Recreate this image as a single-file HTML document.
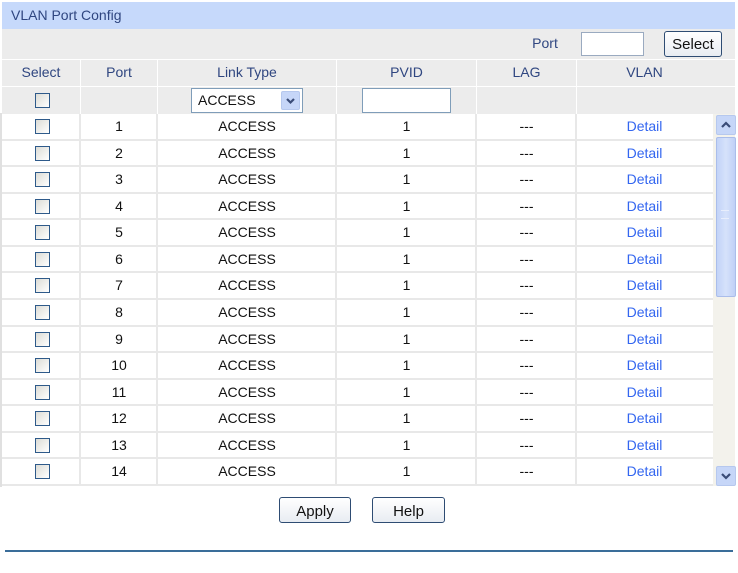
<!DOCTYPE html>
<html><head><style>
body{margin:0;width:738px;height:573px;background:#fff;font-family:"Liberation Sans",Arial,sans-serif;font-size:14px;position:relative;overflow:hidden}
.a{position:absolute}
.hdr{left:2px;top:2px;width:733px;height:27px;background:#c6d9fb;color:#2f4680;font-size:14px;line-height:27px;text-indent:9px}
.gray{left:2px;top:29px;width:733px;height:85px;background:#ececec}
.th{color:#2f4680;text-align:center;line-height:26px}
.cb{width:13px;height:13px;border:1px solid #2e5a8a;background:linear-gradient(135deg,#dcdcd6,#fff)}
.vl{background:#e8e8e8;width:2px}
.row{left:2px;width:711px;height:26.57px;background:#fff;box-shadow:inset 0 -2px 0 #e8e8e8}
.row div{position:absolute;top:0;line-height:25px;text-align:center;color:#111}
.btn{border:1px solid #2e4c73;border-radius:3px;background:linear-gradient(#fff,#e8ecf2);text-align:center;line-height:24px;color:#111;font-size:15px}
.arr{background:#c6d6f8;border:1px solid #b6c8ee;border-radius:2px}
</style></head><body>
<div class="a hdr">VLAN Port Config</div>
<div class="a gray"></div>
<div class="a" style="left:0;top:113px;width:2px;height:374px;background:#e0e0e0"></div>
<div class="a th" style="left:520px;top:31px;width:50px;line-height:24px">Port</div>
<div class="a" style="left:581px;top:32px;width:61px;height:22px;border:1px solid #9aaac0;background:#fff"></div>
<div class="a btn" style="left:664px;top:31px;width:56px;height:24px;line-height:26px">Select</div>
<div class="a" style="left:2px;top:59px;width:733px;height:1px;background:#fff"></div>
<div class="a" style="left:2px;top:86px;width:733px;height:1px;background:#fff"></div>
<div class="a" style="left:80px;top:60px;width:1px;height:54px;background:#fff"></div>
<div class="a" style="left:157px;top:60px;width:1px;height:54px;background:#fff"></div>
<div class="a" style="left:336px;top:60px;width:1px;height:54px;background:#fff"></div>
<div class="a" style="left:476px;top:60px;width:1px;height:54px;background:#fff"></div>
<div class="a" style="left:576px;top:60px;width:1px;height:54px;background:#fff"></div>
<div class="a th" style="left:2px;top:59px;width:78px">Select</div>
<div class="a th" style="left:81px;top:59px;width:76px">Port</div>
<div class="a th" style="left:158px;top:59px;width:178px">Link Type</div>
<div class="a th" style="left:337px;top:59px;width:139px">PVID</div>
<div class="a th" style="left:477px;top:59px;width:99px">LAG</div>
<div class="a th" style="left:577px;top:59px;width:135px">VLAN</div>
<div class="a cb" style="left:35px;top:93px"></div>
<div class="a" style="left:191px;top:88px;width:110px;height:23px;border:1px solid #7f9db9;background:#fff;line-height:23px;text-indent:6px;color:#111">ACCESS</div>
<div class="a arr" style="left:281px;top:91px;width:17px;height:17px"><svg width="17" height="17"><path d="M5 7 L8.5 10.5 L12 7" stroke="#3a4c78" stroke-width="2.2" fill="none"/></svg></div>
<div class="a" style="left:362px;top:88px;width:87px;height:23px;border:1px solid #7f9db9;background:#fff"></div>

<div class="a" style="left:2px;top:114px">
<div class="a row" style="left:0;top:0px"><div style="left:33px;top:5px" class="cb"></div><div style="left:79px;width:76px">1</div><div style="left:156px;width:178px">ACCESS</div><div style="left:335px;width:139px">1</div><div style="left:475px;width:99px">---</div><div style="left:575px;width:135px;color:#3366f0">Detail</div></div>
<div class="a row" style="left:0;top:26.57px"><div style="left:33px;top:5px" class="cb"></div><div style="left:79px;width:76px">2</div><div style="left:156px;width:178px">ACCESS</div><div style="left:335px;width:139px">1</div><div style="left:475px;width:99px">---</div><div style="left:575px;width:135px;color:#3366f0">Detail</div></div>
<div class="a row" style="left:0;top:53.14px"><div style="left:33px;top:5px" class="cb"></div><div style="left:79px;width:76px">3</div><div style="left:156px;width:178px">ACCESS</div><div style="left:335px;width:139px">1</div><div style="left:475px;width:99px">---</div><div style="left:575px;width:135px;color:#3366f0">Detail</div></div>
<div class="a row" style="left:0;top:79.71px"><div style="left:33px;top:5px" class="cb"></div><div style="left:79px;width:76px">4</div><div style="left:156px;width:178px">ACCESS</div><div style="left:335px;width:139px">1</div><div style="left:475px;width:99px">---</div><div style="left:575px;width:135px;color:#3366f0">Detail</div></div>
<div class="a row" style="left:0;top:106.28px"><div style="left:33px;top:5px" class="cb"></div><div style="left:79px;width:76px">5</div><div style="left:156px;width:178px">ACCESS</div><div style="left:335px;width:139px">1</div><div style="left:475px;width:99px">---</div><div style="left:575px;width:135px;color:#3366f0">Detail</div></div>
<div class="a row" style="left:0;top:132.85px"><div style="left:33px;top:5px" class="cb"></div><div style="left:79px;width:76px">6</div><div style="left:156px;width:178px">ACCESS</div><div style="left:335px;width:139px">1</div><div style="left:475px;width:99px">---</div><div style="left:575px;width:135px;color:#3366f0">Detail</div></div>
<div class="a row" style="left:0;top:159.42px"><div style="left:33px;top:5px" class="cb"></div><div style="left:79px;width:76px">7</div><div style="left:156px;width:178px">ACCESS</div><div style="left:335px;width:139px">1</div><div style="left:475px;width:99px">---</div><div style="left:575px;width:135px;color:#3366f0">Detail</div></div>
<div class="a row" style="left:0;top:185.99px"><div style="left:33px;top:5px" class="cb"></div><div style="left:79px;width:76px">8</div><div style="left:156px;width:178px">ACCESS</div><div style="left:335px;width:139px">1</div><div style="left:475px;width:99px">---</div><div style="left:575px;width:135px;color:#3366f0">Detail</div></div>
<div class="a row" style="left:0;top:212.56px"><div style="left:33px;top:5px" class="cb"></div><div style="left:79px;width:76px">9</div><div style="left:156px;width:178px">ACCESS</div><div style="left:335px;width:139px">1</div><div style="left:475px;width:99px">---</div><div style="left:575px;width:135px;color:#3366f0">Detail</div></div>
<div class="a row" style="left:0;top:239.13px"><div style="left:33px;top:5px" class="cb"></div><div style="left:79px;width:76px">10</div><div style="left:156px;width:178px">ACCESS</div><div style="left:335px;width:139px">1</div><div style="left:475px;width:99px">---</div><div style="left:575px;width:135px;color:#3366f0">Detail</div></div>
<div class="a row" style="left:0;top:265.7px"><div style="left:33px;top:5px" class="cb"></div><div style="left:79px;width:76px">11</div><div style="left:156px;width:178px">ACCESS</div><div style="left:335px;width:139px">1</div><div style="left:475px;width:99px">---</div><div style="left:575px;width:135px;color:#3366f0">Detail</div></div>
<div class="a row" style="left:0;top:292.27px"><div style="left:33px;top:5px" class="cb"></div><div style="left:79px;width:76px">12</div><div style="left:156px;width:178px">ACCESS</div><div style="left:335px;width:139px">1</div><div style="left:475px;width:99px">---</div><div style="left:575px;width:135px;color:#3366f0">Detail</div></div>
<div class="a row" style="left:0;top:318.84px"><div style="left:33px;top:5px" class="cb"></div><div style="left:79px;width:76px">13</div><div style="left:156px;width:178px">ACCESS</div><div style="left:335px;width:139px">1</div><div style="left:475px;width:99px">---</div><div style="left:575px;width:135px;color:#3366f0">Detail</div></div>
<div class="a row" style="left:0;top:345.41px"><div style="left:33px;top:5px" class="cb"></div><div style="left:79px;width:76px">14</div><div style="left:156px;width:178px">ACCESS</div><div style="left:335px;width:139px">1</div><div style="left:475px;width:99px">---</div><div style="left:575px;width:135px;color:#3366f0">Detail</div></div>
</div>
<div class="a vl" style="left:79px;top:114px;height:372px"></div>
<div class="a vl" style="left:156px;top:114px;height:372px"></div>
<div class="a vl" style="left:335px;top:114px;height:372px"></div>
<div class="a vl" style="left:475px;top:114px;height:372px"></div>
<div class="a vl" style="left:575px;top:114px;height:372px"></div>

<div class="a" style="left:713px;top:114px;width:22px;height:372px;background:#f3f2ec"></div>
<div class="a arr" style="left:716px;top:115px;width:18px;height:18px"><svg width="18" height="18"><path d="M5 11 L9 7 L13 11" stroke="#3a4c78" stroke-width="2.2" fill="none"/></svg></div>
<div class="a" style="left:716px;top:137px;width:18px;height:158px;background:linear-gradient(90deg,#c2d3f8,#d6e2fb,#bfd0f6);border:1px solid #aabdea;border-radius:2px"></div>
<div class="a" style="left:721px;top:210px;width:8px;height:7px;border-top:1px solid #e8eefc;border-bottom:1px solid #e8eefc"></div>
<div class="a arr" style="left:716px;top:466px;width:18px;height:18px"><svg width="18" height="18"><path d="M5 7 L9 11 L13 7" stroke="#3a4c78" stroke-width="2.2" fill="none"/></svg></div>

<div class="a btn" style="left:279px;top:497px;width:70px;height:24px;line-height:28px">Apply</div>
<div class="a btn" style="left:372px;top:497px;width:71px;height:24px;line-height:28px">Help</div>
<div class="a" style="left:5px;top:550px;width:728px;height:2px;background:#3a6d99"></div>
</body></html>
